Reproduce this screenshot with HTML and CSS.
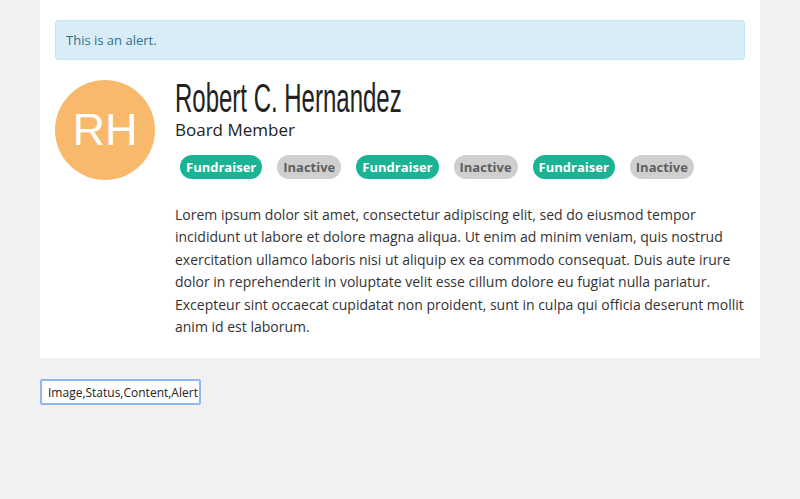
FILE: index.html
```html
<!DOCTYPE html>
<html>
<head>
<meta charset="utf-8">
<link rel="stylesheet" href="styles.css">
</head>
<body>
<div class="card">
  <div class="alert">This is an alert.</div>
  <div class="profile">
    <div class="avatar">RH</div>
    <div class="info">
      <h1 class="name"><span class="name-text">Robert C. Hernandez</span></h1>
      <div class="role">Board Member</div>
      <div class="badges">
        <span class="badge green">Fundraiser</span>
        <span class="badge grey">Inactive</span>
        <span class="badge green">Fundraiser</span>
        <span class="badge grey">Inactive</span>
        <span class="badge green">Fundraiser</span>
        <span class="badge grey">Inactive</span>
      </div>
    </div>
  </div>
  <p class="content">Lorem ipsum dolor sit amet, consectetur adipiscing elit, sed do eiusmod tempor incididunt ut labore et dolore magna aliqua. Ut enim ad minim veniam, quis nostrud exercitation ullamco laboris nisi ut aliquip ex ea commodo consequat. Duis aute irure dolor in reprehenderit in voluptate velit esse cillum dolore eu fugiat nulla pariatur. Excepteur sint occaecat cupidatat non proident, sunt in culpa qui officia deserunt mollit anim id est laborum.</p>
</div>
<div class="footer">
  <input class="field" type="text" value="Image,Status,Content,Alert">
</div>
</body>
</html>
```
FILE: styles.css
```css
html, body {
  margin: 0;
  padding: 0;
  background: #f1f1f1;
  font-family: "Open Sans", "Liberation Sans", sans-serif;
  color: #333;
}
.card {
  width: 690px;
  margin: 0 0 0 40px;
  background: #fff;
  padding: 20px 15px 20px 15px;
}
.alert {
  height: 40px;
  box-sizing: border-box;
  border: 1px solid #bce8f1;
  background: #d9edf7;
  color: #31708f;
  border-radius: 3px;
  font-size: 13px;
  line-height: 38px;
  padding: 0 10px;
}
.profile {
  display: flex;
  gap: 20px;
  margin-top: 20px;
}
.avatar {
  width: 100px;
  height: 100px;
  border-radius: 50%;
  background: #f9b96d;
  color: #fff;
  font-family: "Liberation Sans", Arial, sans-serif;
  font-size: 45px;
  display: flex;
  align-items: center;
  justify-content: center;
  flex-shrink: 0;
}
.info {
  display: flex;
  flex-direction: column;
}
.name {
  margin: 0;
  font-family: "Liberation Sans", Arial, sans-serif;
  font-weight: normal;
  font-size: 41px;
  line-height: 36px;
  height: 36px;
  color: #222;
  white-space: nowrap;
}
.name-text {
  display: inline-block;
  transform: scaleX(0.585);
  transform-origin: left center;
}
.role {
  font-size: 17px;
  line-height: 22px;
  color: #222;
  margin-top: 3px;
}
.badges {
  display: flex;
  gap: 15px;
  margin-top: 14px;
  padding-left: 5px;
}
.badge {
  display: inline-block;
  height: 24px;
  line-height: 24px;
  border-radius: 12px;
  padding: 0 6px;
  font-size: 13px;
  font-weight: bold;
}
.badge.green {
  background: #1ab394;
  color: #fff;
}
.badge.grey {
  background: #cfcfcf;
  color: #5e5e5e;
}
.content {
  margin: 24px 0 0 120px;
  font-size: 14px;
  line-height: 22.4px;
  color: #333;
}
.footer {
  padding: 21px 40px;
}
.field {
  width: 161px;
  height: 26px;
  box-sizing: border-box;
  border: 2px solid #8fb8f0;
  border-radius: 2px;
  font-family: "Open Sans", sans-serif;
  font-size: 12px;
  color: #222;
  padding: 0 1px 0 6px;
  outline: none;
  background: #fff;
}
```
